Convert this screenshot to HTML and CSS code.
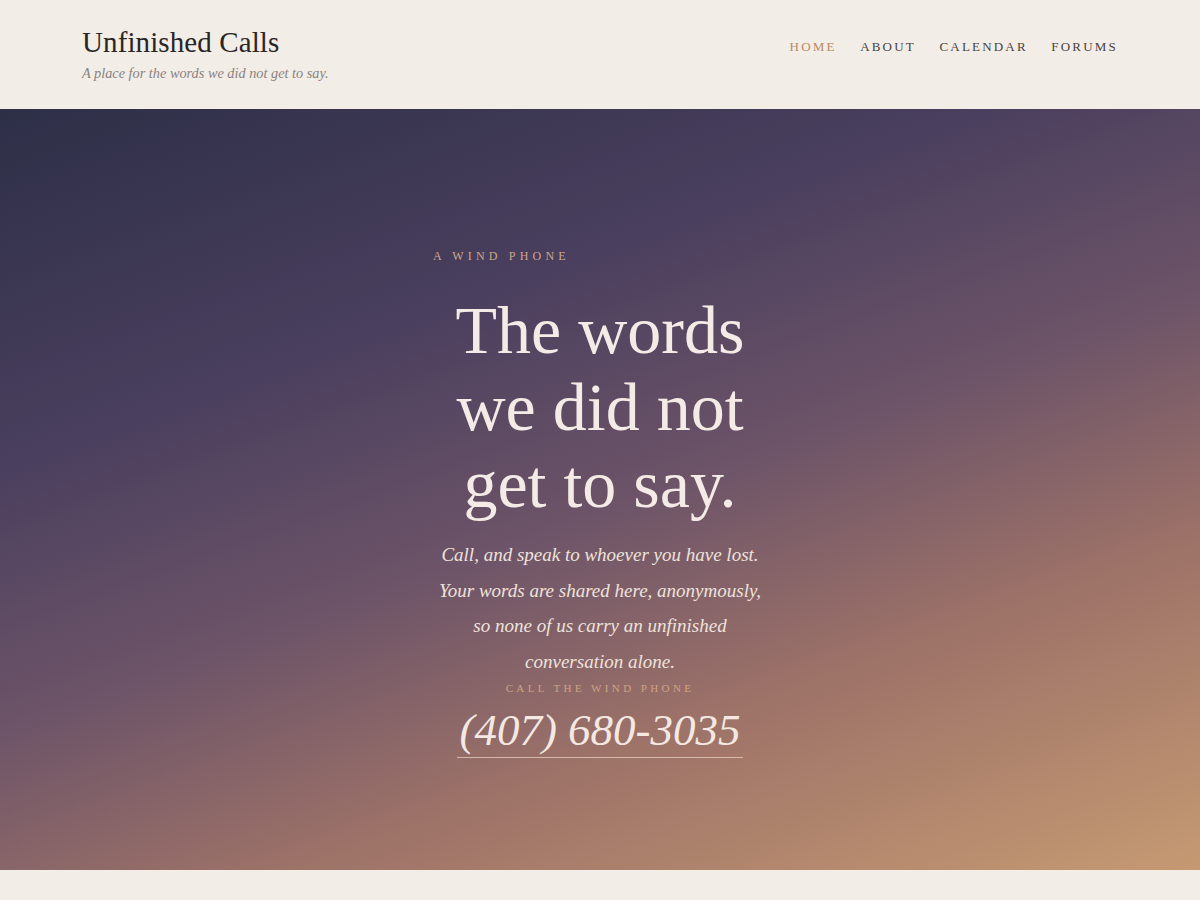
FILE: index.html
```html
<!DOCTYPE html>
<html lang="en">
<head>
<meta charset="utf-8">
<title>Unfinished Calls</title>
<link rel="stylesheet" href="styles.css">
</head>
<body>
<header class="site-header">
  <div class="brand">
    <div class="brand-title">Unfinished Calls</div>
    <div class="brand-tagline">A place for the words we did not get to say.</div>
  </div>
  <nav class="nav">
    <a class="nav-link active" href="#">Home</a>
    <a class="nav-link" href="#">About</a>
    <a class="nav-link" href="#">Calendar</a>
    <a class="nav-link" href="#">Forums</a>
  </nav>
</header>
<main class="hero">
  <div class="hero-inner">
    <div class="eyebrow">A Wind Phone</div>
    <h1 class="hero-title">The words we did not get to say.</h1>
    <p class="hero-text">Call, and speak to whoever you have lost. Your words are shared here, anonymously, so none of us carry an unfinished conversation alone.</p>
    <div class="call-label">Call the wind phone</div>
    <a class="phone" href="#">(407) 680-3035</a>
  </div>
</main>
<div class="below"></div>
</body>
</html>
```
FILE: styles.css
```css
* { box-sizing: border-box; }
html, body { margin: 0; padding: 0; }
body {
  background: #f2ede7;
  font-family: "Liberation Serif", "DejaVu Serif", serif;
  color: #2b2626;
}
.site-header {
  height: 109px;
  padding: 24px 82px 0 82px;
  display: flex;
  justify-content: space-between;
  align-items: flex-start;
}
.brand-title {
  font-size: 29px;
  line-height: 36px;
  color: #2a2525;
  letter-spacing: 0.1px;
}
.brand-tagline {
  margin-top: 5px;
  font-style: italic;
  font-size: 14.3px;
  color: #8a8280;
}
.nav {
  display: flex;
  gap: 23.5px;
  padding-top: 15px;
}
.nav-link {
  text-decoration: none;
  text-transform: uppercase;
  font-size: 13px;
  letter-spacing: 2.2px;
  color: #4a4242;
}
.nav-link.active { color: #b98a62; }
.hero {
  height: 761px;
  background: linear-gradient(160deg, #2d2f47 0%, #4a3f5e 30%, #6d5468 52%, #9d7268 72%, #c59a72 100%);
  display: flex;
  justify-content: center;
  padding-top: 140px;
}
.hero-inner {
  width: 334px;
  display: flex;
  flex-direction: column;
  align-items: center;
  text-align: center;
}
.eyebrow {
  align-self: flex-start;
  text-transform: uppercase;
  font-size: 12px;
  letter-spacing: 4.2px;
  color: #d1a68a;
  line-height: 14px;
}
.hero-title {
  margin: 29px 0 0 0;
  font-weight: normal;
  font-size: 68px;
  line-height: 77px;
  color: #f4ebe6;
}
.hero-text {
  margin: 14px 0 0 0;
  font-style: italic;
  font-size: 19px;
  line-height: 35.5px;
  color: #eee2dc;
}
.call-label {
  margin-top: 2px;
  text-transform: uppercase;
  font-size: 11px;
  letter-spacing: 3.4px;
  color: #cfa285;
  line-height: 14px;
}
.phone {
  margin-top: 9px;
  font-style: italic;
  font-size: 45px;
  line-height: 52px;
  color: #f4e8e2;
  text-decoration: none;
  border-bottom: 1px solid rgba(240, 215, 200, 0.7);
  padding: 0 2px 1px;
}
.below {
  height: 30px;
  background: #f2ede7;
}
```
